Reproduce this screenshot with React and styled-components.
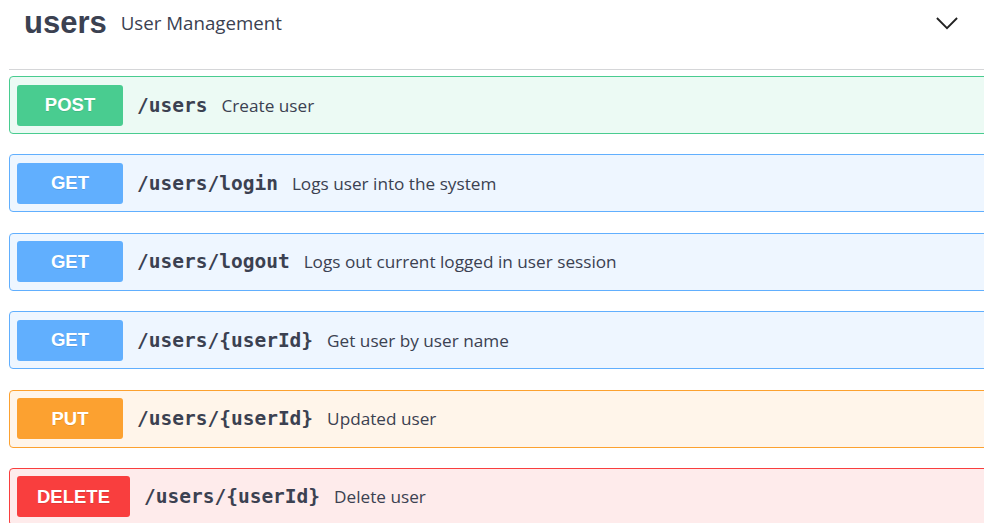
import React from "react";
import styled, { createGlobalStyle } from "styled-components";

const methods = {
  post: { main: "#49cc90", soft: "#ecfaf4" },
  get: { main: "#61affe", soft: "#eef6ff" },
  put: { main: "#fca130", soft: "#fff5ea" },
  delete: { main: "#f93e3e", soft: "#feebeb" },
};

const ops = [
  { method: "post", path: "/users", summary: "Create user" },
  { method: "get", path: "/users/login", summary: "Logs user into the system" },
  { method: "get", path: "/users/logout", summary: "Logs out current logged in user session" },
  { method: "get", path: "/users/{userId}", summary: "Get user by user name" },
  { method: "put", path: "/users/{userId}", summary: "Updated user" },
  { method: "delete", path: "/users/{userId}", summary: "Delete user" },
];

function App() {
  return (
    <>
      <GlobalStyle />
      <Section>
        <TagHeader>
          <TagName>users</TagName>
          <TagDesc>User Management</TagDesc>
          <Chevron viewBox="0 0 24 14" aria-hidden="true">
            <path d="M1 1l11 11L23 1" fill="none" stroke="#222" strokeWidth="2" />
          </Chevron>
        </TagHeader>
        <OpList>
          {ops.map((op, i) => (
            <OpBlock key={i} $method={op.method}>
              <MethodBadge $method={op.method}>{op.method.toUpperCase()}</MethodBadge>
              <Path>{op.path}</Path>
              <Summary>{op.summary}</Summary>
            </OpBlock>
          ))}
        </OpList>
      </Section>
    </>
  );
}

export default App;

const GlobalStyle = createGlobalStyle`
  html, body {
    margin: 0;
    padding: 0;
    background: #fff;
    overflow: hidden;
  }
  body {
    font-family: "Open Sans", sans-serif;
    color: #3b4151;
  }
`;

const Section = styled.div`
  padding-left: 9px;
  width: 1010px;
`;

const TagHeader = styled.div`
  display: flex;
  align-items: center;
  height: 45px;
  padding: 0 0 24px 15px;
  border-bottom: 1px solid #d5d6d8;
`;

const TagName = styled.span`
  font-family: "Liberation Sans", Arial, sans-serif;
  font-size: 31px;
  font-weight: 700;
  color: #3b4151;
`;

const TagDesc = styled.span`
  font-size: 18.7px;
  margin-left: 14px;
  color: #3b4151;
`;

const Chevron = styled.svg`
  width: 22px;
  height: 13px;
  margin-left: auto;
  margin-right: 61px;
  margin-top: 2px;
`;

const OpList = styled.div`
  padding-top: 6px;
`;

const OpBlock = styled.div`
  display: flex;
  align-items: center;
  box-sizing: border-box;
  height: 58px;
  margin-bottom: 20.4px;
  padding: 0 7px;
  border: 1px solid ${(p) => methods[p.$method].main};
  border-radius: 4px;
  background: ${(p) => methods[p.$method].soft};
`;

const MethodBadge = styled.div`
  min-width: 106px;
  height: 41px;
  padding: 0 20px;
  box-sizing: border-box;
  display: flex;
  align-items: center;
  justify-content: center;
  border-radius: 3px;
  background: ${(p) => methods[p.$method].main};
  color: #fff;
  font-family: "Liberation Sans", Arial, sans-serif;
  font-weight: 700;
  font-size: 18.5px;
  text-shadow: 0 1px 0 rgba(0, 0, 0, 0.1);
`;

const Path = styled.span`
  margin-left: 14px;
  font-family: "DejaVu Sans Mono", monospace;
  font-weight: 700;
  font-size: 19.5px;
  color: #3b4151;
`;

const Summary = styled.span`
  margin-left: 14px;
  font-size: 17.2px;
  color: #3b4151;
`;
